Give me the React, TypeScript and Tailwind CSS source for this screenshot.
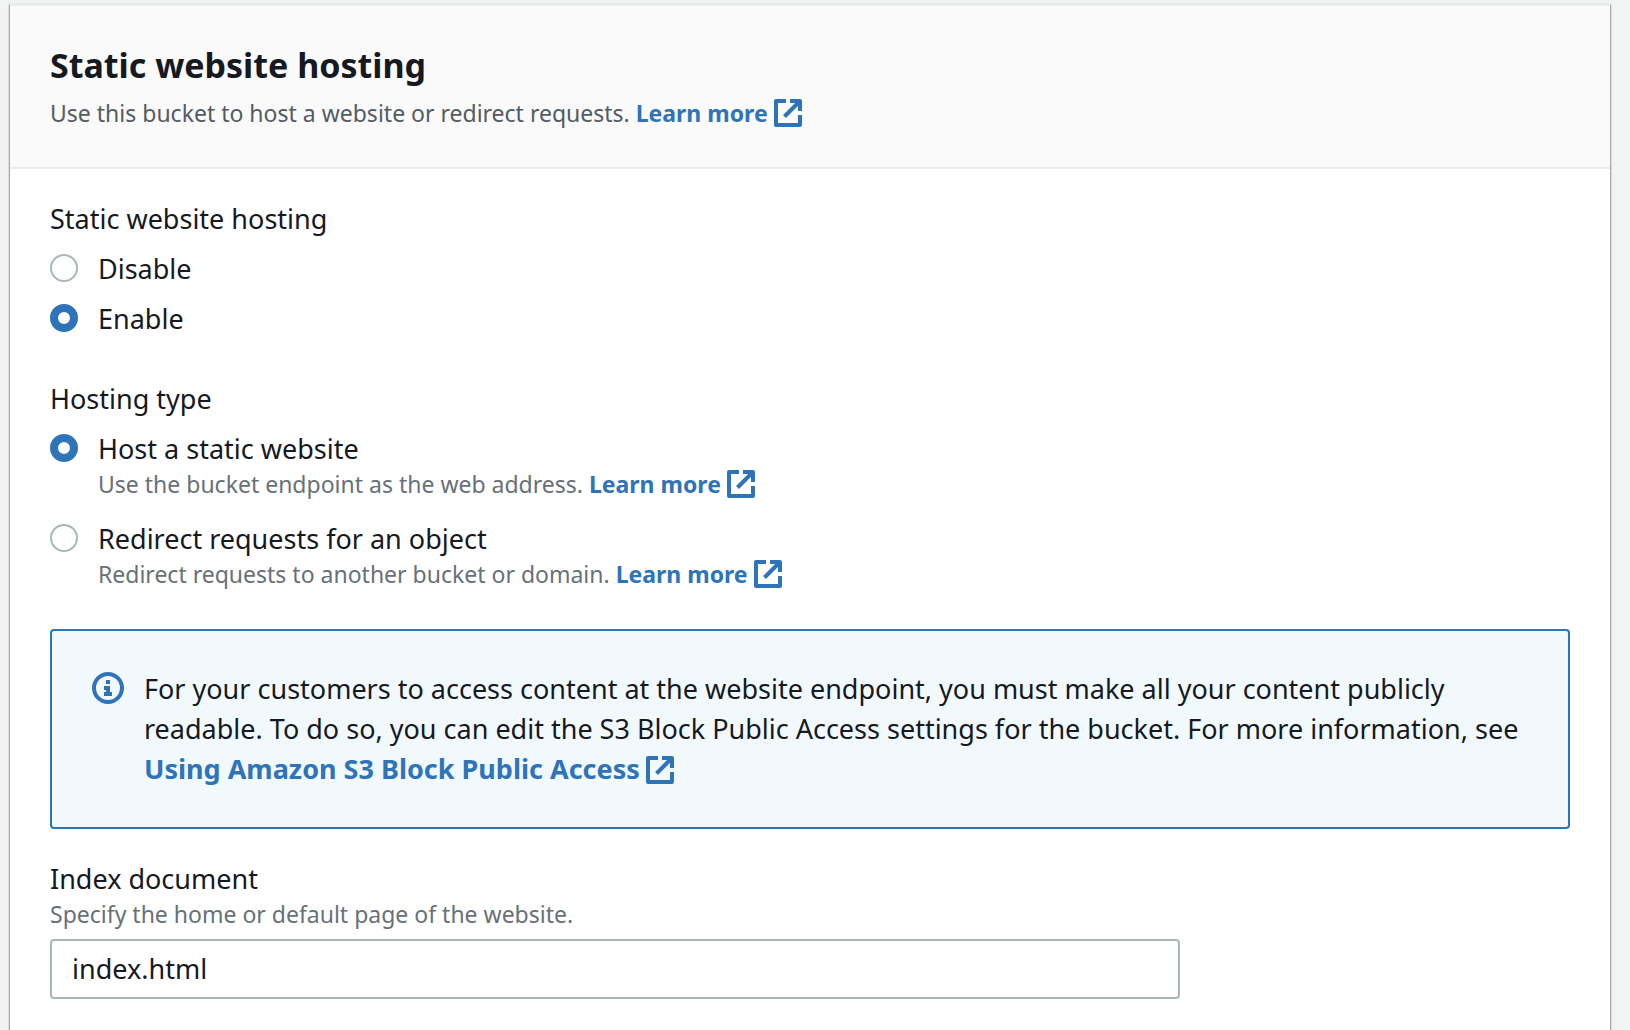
import { useState, type ReactNode } from "react";

function ExternalIcon() {
  return (
    <svg
      className="ml-1.5 inline-block size-7 align-[-5px]"
      viewBox="0 0 28 28"
      fill="none"
      stroke="currentColor"
      strokeWidth="4"
      strokeLinejoin="round"
      aria-hidden="true"
    >
      <path d="M12 2H2v24h24V16" />
      <path d="M16 2h10v10" />
      <path d="M10.500 17.500L25 3" />
    </svg>
  );
}

function InfoIcon() {
  return (
    <svg className="mt-[3px] size-8 shrink-0 text-[#2f73b9]" viewBox="0 0 32 32" aria-hidden="true">
      <circle cx="16" cy="16" r="14" fill="none" stroke="currentColor" strokeWidth="4" />
      <path d="M14 8h4v4h-4zM12 14h6v6h2v4h-8v-4h2v-2h-2z" fill="currentColor" />
    </svg>
  );
}

function ExternalLink({ children }: { children: ReactNode }) {
  return (
    <a href="#" className="font-bold text-[#2f73b9] hover:underline">
      {children}
      <ExternalIcon />
    </a>
  );
}

type OptionProps = {
  id: string;
  name: string;
  label: string;
  checked: boolean;
  onSelect: () => void;
  children?: ReactNode;
};

function RadioOption({ id, name, label, checked, onSelect, children }: OptionProps) {
  return (
    <div className="flex gap-5">
      <input
        type="radio"
        id={id}
        name={name}
        checked={checked}
        onChange={onSelect}
        className="mt-[5px] size-7 shrink-0 appearance-none rounded-full border-2 border-[#aab7b8] bg-white checked:border-8 checked:border-[#2f73b9]"
      />
      <div>
        <label htmlFor={id} className="block text-[27px] leading-10">
          {label}
        </label>
        {children && <p className="text-[23px] leading-[30px] text-[#687078]">{children}</p>}
      </div>
    </div>
  );
}

export default function App() {
  const [hosting, setHosting] = useState("enable");
  const [type, setType] = useState("static");
  const [indexDoc, setIndexDoc] = useState("index.html");

  return (
    <div className="flex min-h-screen flex-col bg-[#f2f3f3] pt-1 pr-5 pl-2.5 font-['Noto_Sans',sans-serif] text-[#16191f]">
      <main className="grow border-t-2 border-[#eaeded] bg-white shadow-[0_1px_2px_1px_#0007161f,1px_1px_1px_0_#00071640,-1px_1px_1px_0_#00071640]">
        <header className="border-b-2 border-[#eaeded] bg-[#fafafa] px-10 pt-9 pb-[38px]">
          <h1 className="text-[34px] leading-[46px] font-bold">Static website hosting</h1>
          <p className="mt-[9px] text-[23px] leading-8 text-[#545b64]">
            Use this bucket to host a website or redirect requests. <ExternalLink>Learn more</ExternalLink>
          </p>
        </header>

        <div className="px-10 pt-[30px]">
          <fieldset>
            <legend className="text-[27px] leading-10">Static website hosting</legend>
            <div className="mt-2.5 flex flex-col gap-2.5">
              <RadioOption id="disable" name="hosting" label="Disable" checked={hosting === "disable"} onSelect={() => setHosting("disable")} />
              <RadioOption id="enable" name="hosting" label="Enable" checked={hosting === "enable"} onSelect={() => setHosting("enable")} />
            </div>
          </fieldset>

          <fieldset className="mt-10">
            <legend className="text-[27px] leading-10">Hosting type</legend>
            <div className="mt-2.5 flex flex-col gap-5">
              <RadioOption id="static" name="type" label="Host a static website" checked={type === "static"} onSelect={() => setType("static")}>
                Use the bucket endpoint as the web address. <ExternalLink>Learn more</ExternalLink>
              </RadioOption>
              <RadioOption id="redirect" name="type" label="Redirect requests for an object" checked={type === "redirect"} onSelect={() => setType("redirect")}>
                Redirect requests to another bucket or domain. <ExternalLink>Learn more</ExternalLink>
              </RadioOption>
            </div>
          </fieldset>

          <div className="mt-10 flex gap-5 rounded-sm border-2 border-[#2f73b9] bg-[#f1f9fd] py-[38px] pr-8 pl-10">
            <InfoIcon />
            <p className="text-[27px] leading-10">
              For your customers to access content at the website endpoint, you must make all your content publicly
              readable. To do so, you can edit the S3 Block Public Access settings for the bucket. For more information, see{" "}
              <ExternalLink>Using Amazon S3 Block Public Access</ExternalLink>
            </p>
          </div>

          <div className="mt-[30px]">
            <label htmlFor="index" className="block text-[27px] leading-10">
              Index document
            </label>
            <p id="index-hint" className="text-[23px] leading-[30px] text-[#687078]">
              Specify the home or default page of the website.
            </p>
            <input
              id="index"
              type="text"
              aria-describedby="index-hint"
              value={indexDoc}
              onChange={(e) => setIndexDoc(e.target.value)}
              className="mt-2.5 block h-15 w-full max-w-[1130px] rounded-sm border-2 border-[#aab7b8] bg-white px-5 pb-0.5 text-[27px]"
            />
          </div>
        </div>
      </main>
    </div>
  );
}
